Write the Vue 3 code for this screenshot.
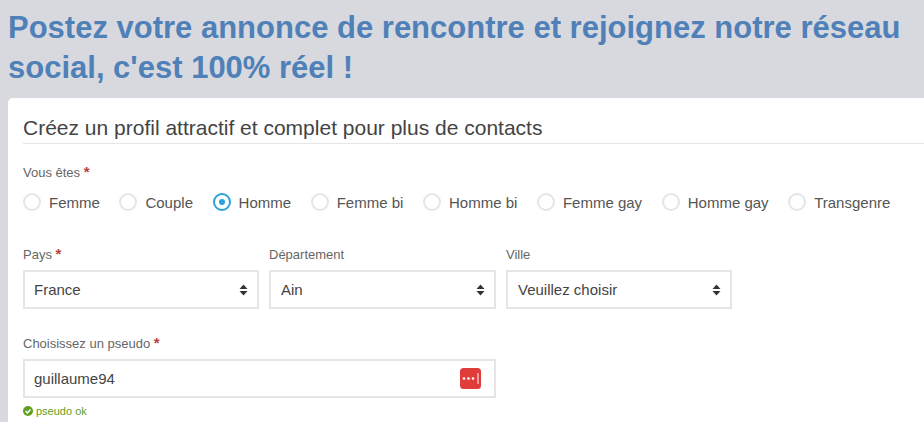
<template>
  <div class="page">
    <h1 class="headline">Postez votre annonce de rencontre et rejoignez notre réseau social, c'est 100% réel !</h1>
    <div class="card">
      <h2 class="card-title">Créez un profil attractif et complet pour plus de contacts</h2>

      <div class="label first">Vous êtes <span class="req">*</span></div>
      <div class="radios">
        <label v-for="g in genres" :key="g" class="radio">
          <span :class="['circle', g === 'Homme' ? 'checked' : '']"></span>{{ g }}
        </label>
      </div>

      <div class="selects">
        <div v-for="s in selects" :key="s.label" :class="['field', s.cls]">
          <div class="label">{{ s.label }} <span v-if="s.req" class="req">*</span></div>
          <div class="box">
            <span>{{ s.value }}</span>
            <svg class="arrows" width="9" height="12" viewBox="0 0 9 12">
              <path d="M4.5 0.5L8.5 5H0.5Z M4.5 11.5L0.5 7H8.5Z" fill="#333" />
            </svg>
          </div>
        </div>
      </div>

      <div class="pseudo">
        <div class="label">Choisissez un pseudo <span class="req">*</span></div>
        <div class="box">
          <span>guillaume94</span>
          <svg class="pass" width="21" height="21" viewBox="0 0 21 21">
            <rect width="21" height="21" rx="3.5" fill="#e03c3a" />
            <circle cx="4" cy="10.5" r="1.3" fill="#fff" />
            <circle cx="8.5" cy="10.5" r="1.3" fill="#fff" />
            <circle cx="13" cy="10.5" r="1.3" fill="#fff" />
            <rect x="17.5" y="5" width="1" height="11" fill="#fff" />
          </svg>
        </div>
        <div class="ok">
          <svg width="10" height="10" viewBox="0 0 10 10">
            <circle cx="5" cy="5" r="5" fill="#5fa01f" />
            <path d="M2.6 5.1L4.4 6.9L7.5 3.6" fill="none" stroke="#fff" stroke-width="1.5" />
          </svg>
          pseudo ok
        </div>
      </div>
    </div>
  </div>
</template>

<script setup>
const genres = ['Femme', 'Couple', 'Homme', 'Femme bi', 'Homme bi', 'Femme gay', 'Homme gay', 'Transgenre']
const selects = [
  { label: 'Pays', value: 'France', req: true, cls: 'pays' },
  { label: 'Département', value: 'Ain', req: false, cls: 'dept' },
  { label: 'Ville', value: 'Veuillez choisir', req: false, cls: 'ville' },
]
</script>

<style>
html, body { margin: 0; background: #d8d9df; overflow: hidden; }
</style>

<style scoped>
.page {
  height: 422px;
  overflow: hidden;
  padding-left: 8px;
  font-family: "Liberation Sans", Arial, sans-serif;
  color: #333;
}
.headline {
  margin: 0;
  padding: 8px 0 10px;
  font-size: 31px;
  line-height: 40px;
  font-weight: 700;
  color: #4f81b8;
}
.card {
  height: 400px;
  padding: 17px 0 0 15px;
  background: #fff;
  border-radius: 5px 0 0 0;
}
.card-title {
  margin: 0;
  height: 28px;
  font-size: 21px;
  line-height: 26px;
  font-weight: 400;
  color: #444;
  border-bottom: 1px solid #e5e5e5;
}
.label {
  height: 18px;
  font-size: 13px;
  line-height: 18px;
  color: #666;
}
.label.first { margin-top: 20px; }
.req {
  color: #b9413c;
  font-size: 15px;
  font-weight: 700;
  line-height: 12px;
}
.radios {
  display: flex;
  gap: 19.6px;
  margin-top: 11px;
}
.radio {
  display: flex;
  align-items: center;
  gap: 8px;
  height: 18px;
  font-size: 15px;
  color: #555;
  white-space: nowrap;
}
.circle {
  width: 14px;
  height: 14px;
  border: 2px solid #e5e5e5;
  border-radius: 50%;
  flex: none;
  position: relative;
}
.circle.checked { border-color: #29a3dc; }
.circle.checked::after {
  content: "";
  position: absolute;
  left: 4px;
  top: 4px;
  width: 6px;
  height: 6px;
  border-radius: 50%;
  background: #29a3dc;
}
.selects {
  display: grid;
  grid-template-columns: 236px 227px 226px;
  column-gap: 10px;
  margin-top: 35px;
}
.field .label { margin-bottom: 6px; }
.box {
  box-sizing: border-box;
  height: 39px;
  display: flex;
  align-items: center;
  justify-content: space-between;
  padding: 0 9px;
  border: 2px solid #e5e5e5;
  font-size: 15px;
  color: #444;
  background: #fff;
}
.dept .box, .ville .box { padding-left: 10px; }
.pseudo { margin-top: 26px; width: 473px; }
.pseudo .label { margin-bottom: 6px; }
.pseudo .box { padding-right: 13px; }
.ok {
  display: flex;
  align-items: center;
  gap: 3px;
  margin-top: 7px;
  font-size: 11px;
  line-height: 12px;
  color: #5fa01f;
}
</style>
